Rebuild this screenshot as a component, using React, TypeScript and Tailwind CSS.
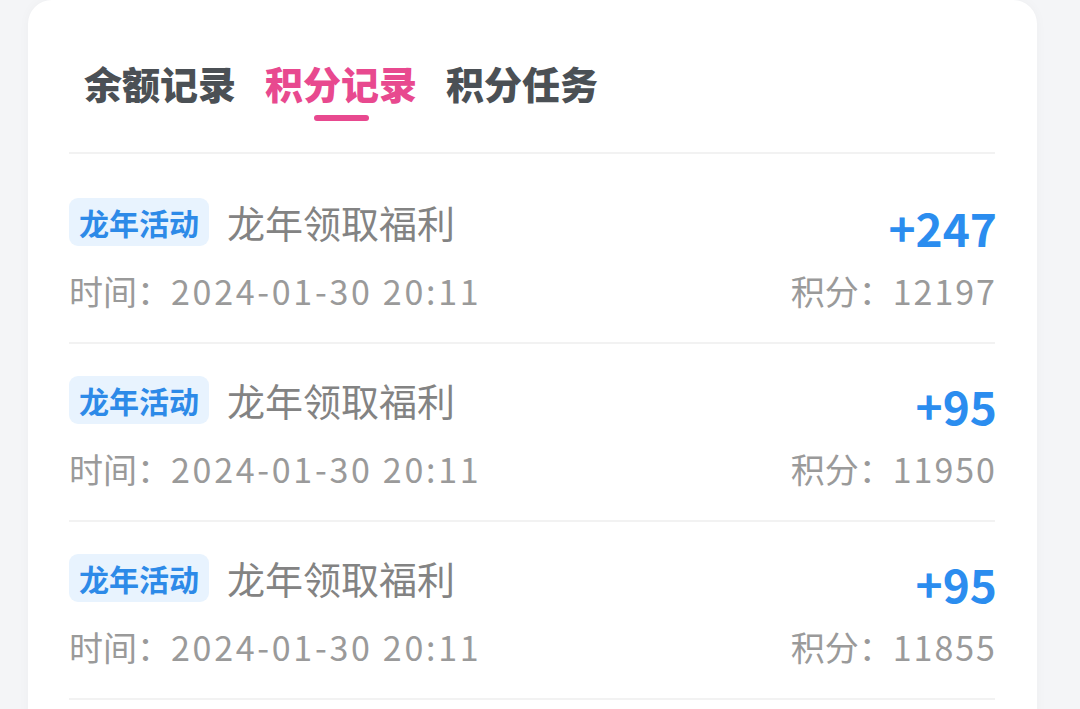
import React from "react";

const rows = [
  { amount: "+247", balance: "12197" },
  { amount: "+95", balance: "11950" },
  { amount: "+95", balance: "11855" },
];

export default function App() {
  return (
    <div
      className="w-[1080px] h-[709px] overflow-hidden bg-[#f4f5f7] px-[28px] pr-[43px]"
      style={{ fontFamily: '"Noto Sans CJK SC", "Noto Sans", sans-serif' }}
    >
      <div className="h-[740px] bg-white rounded-t-[24px] pl-[41px] pr-[42px] shadow-[0_0_12px_rgba(0,0,0,0.03)]">
        <div className="pt-[64px] pb-[31px] border-b-2 border-[#f2f2f2]">
          <div className="flex gap-[29px] pl-[15px]">
            <div className="flex flex-col items-center">
              <span className="text-[38px] leading-[38px] font-black text-[#4b5055]">余额记录</span>
              <span className="mt-[13px] h-[6px] w-[55px] rounded-full bg-transparent" />
            </div>
            <div className="flex flex-col items-center">
              <span className="text-[38px] leading-[38px] font-black text-[#e8498f]">积分记录</span>
              <span className="mt-[13px] h-[6px] w-[55px] rounded-full bg-[#e8498f]" />
            </div>
            <div className="flex flex-col items-center">
              <span className="text-[38px] leading-[38px] font-black text-[#4b5055]">积分任务</span>
              <span className="mt-[13px] h-[6px] w-[55px] rounded-full bg-transparent" />
            </div>
          </div>
        </div>
        <div className="pt-[12px]">
          {rows.map((r, i) => (
            <div key={i} className="pt-[32px] pb-[29px] border-b-2 border-[#f2f2f2]">
              <div className="flex items-center justify-between h-[48px]">
                <div className="flex items-center">
                  <span className="h-[48px] px-[10px] rounded-[9px] bg-[#e8f3fe] text-[#2d8ae8] text-[30px] leading-[48px] font-bold">
                    龙年活动
                  </span>
                  <span className="ml-[18px] text-[38px] leading-[48px] text-[#838383]">龙年领取福利</span>
                </div>
                <span className="mt-[10px] -mr-[2px] text-[46px] leading-none font-bold text-[#2b8def]">
                  {r.amount}
                </span>
              </div>
              <div className="mt-[23px] flex items-center justify-between h-[44px] text-[34px] leading-[44px] text-[#9a9a9a]">
                <span>
                  时间：<span className="tracking-[2.7px]">2024-01-30 20:11</span>
                </span>
                <span className="-mr-[2px]">
                  积分：<span className="tracking-[2px]">{r.balance}</span>
                </span>
              </div>
            </div>
          ))}
        </div>
      </div>
    </div>
  );
}
